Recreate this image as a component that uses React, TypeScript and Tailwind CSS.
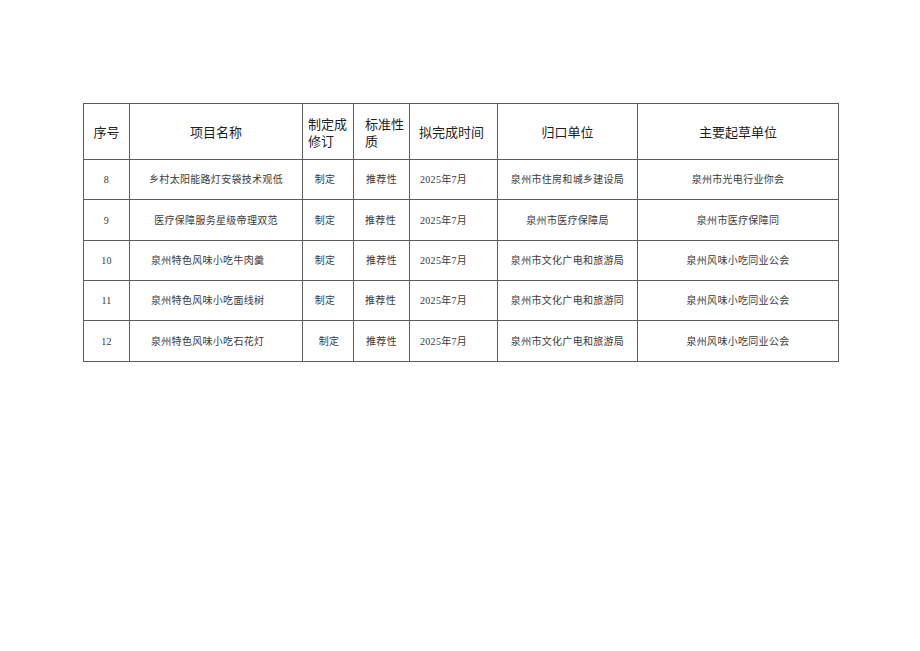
import React from "react";

const widths = ["w-[46px]", "w-[173px]", "w-[51px]", "w-[56px]", "w-[88px]", "w-[140px]", "w-[201px]"];

const rows: { h: string; cells: string[]; align?: Record<number, string> }[] = [
  { h: "h-[40px]", cells: ["8", "乡村太阳能路灯安袋技术观低", "制定", "推荐性", "2025年7月", "泉州市住房和城乡建设局", "泉州市光电行业你会"] },
  { h: "h-[41px]", cells: ["9", "医疗保障服务星级帝理双范", "制定", "推荐性", "2025年7月", "泉州市医疗保障局", "泉州市医疗保障同"], align: { 3: "justify-center pr-[2px]" } },
  { h: "h-[40px]", cells: ["10", "泉州特色风味小吃牛肉羹", "制定", "推荐性", "2025年7月", "泉州市文化广电和旅游局", "泉州风味小吃同业公会"], align: { 1: "justify-start pl-[21px]" } },
  { h: "h-[40px]", cells: ["11", "泉州特色风味小吃面线树", "制定", "推荐性", "2025年7月", "泉州市文化广电和旅游同", "泉州风味小吃同业公会"], align: { 1: "justify-start pl-[21px]", 3: "justify-center pr-[2px]" } },
  { h: "h-[41px]", cells: ["12", "泉州特色风味小吃石花灯", "制定", "推荐性", "2025年7月", "泉州市文化广电和旅游局", "泉州风味小吃同业公会"], align: { 1: "justify-start pl-[21px]", 2: "justify-center pl-[2px]" } },
];

const bodyAlign = [
  "justify-center",
  "justify-center",
  "justify-center pr-[6px]",
  "justify-center",
  "justify-start pl-[10px]",
  "justify-center",
  "justify-center",
];

export default function App() {
  const serif = { fontFamily: '"Liberation Serif", "Noto Sans CJK SC", serif' };
  const sans = { fontFamily: '"Noto Sans CJK SC", "Noto Sans", sans-serif' };
  return (
    <div className="w-[920px] h-[651px] bg-white pt-[103px] pl-[83px]">
      <div className="w-[756px] border-l border-t border-[#5c5c5c]">
        <div className="flex h-[56px] text-[13px] text-[#1e1e1e]" style={sans}>
          <div className={`${widths[0]} border-r border-b border-[#5c5c5c] flex items-center justify-center`}>序号</div>
          <div className={`${widths[1]} border-r border-b border-[#5c5c5c] flex items-center justify-center`}>项目名称</div>
          <div className={`${widths[2]} border-r border-b border-[#5c5c5c] flex items-center pl-[5px] leading-[17px]`}>
            <div>制定成<br />修订</div>
          </div>
          <div className={`${widths[3]} border-r border-b border-[#5c5c5c] flex items-center pl-[11px] leading-[17px]`}>
            <div>标准性<br />质</div>
          </div>
          <div className={`${widths[4]} border-r border-b border-[#5c5c5c] flex items-center pl-[9px]`}>拟完成时间</div>
          <div className={`${widths[5]} border-r border-b border-[#5c5c5c] flex items-center justify-center`}>归口单位</div>
          <div className={`${widths[6]} border-r border-b border-[#5c5c5c] flex items-center justify-center`}>主要起草单位</div>
        </div>
        {rows.map((r, i) => (
          <div key={i} className={`flex ${r.h} text-[10px] tracking-[0.3px] text-[#3a3a3a]`} style={serif}>
            {r.cells.map((c, j) => (
              <div
                key={j}
                className={`${widths[j]} border-r border-b border-[#5c5c5c] flex items-center ${r.align?.[j] ?? bodyAlign[j]} whitespace-nowrap`}
              >
                {c}
              </div>
            ))}
          </div>
        ))}
      </div>
    </div>
  );
}
